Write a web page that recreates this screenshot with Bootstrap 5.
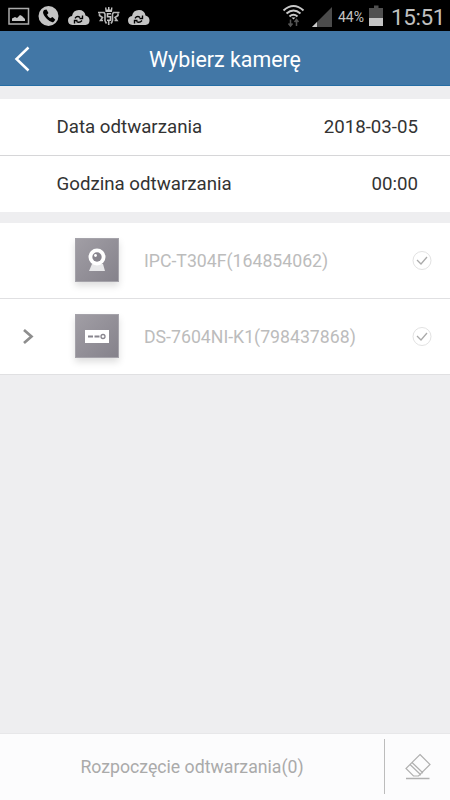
<!DOCTYPE html>
<html lang="pl">
<head>
<meta charset="utf-8">
<meta name="viewport" content="width=device-width, initial-scale=1">
<title>Wybierz kamerę</title>
<link href="https://cdn.jsdelivr.net/npm/bootstrap@5.3.0/dist/css/bootstrap.min.css" rel="stylesheet">
<style>
body{font-family:Roboto,"Liberation Sans",sans-serif;background:#eeeef0;color:#333;font-size:17.7px;line-height:24px}
svg{display:block;flex:none}
.statusbar{height:31px;background:#000;color:#c4c4c4}
.pct{font-size:14px;width:27px;margin-left:6px;padding-top:2px;white-space:nowrap}
.clock{font-size:22.5px;margin-left:8px;margin-right:5px;letter-spacing:-.4px;padding-top:2px;color:#c0c0c0}
.appbar{height:55px;background:#4277a6;border-bottom:1px solid #256da4}
.appbar h1{font-size:21.4px;line-height:28px;padding-top:3px}
.back{width:48px}
.options{margin-top:13px;font-size:18.7px}
.opt{height:56px;padding:0 32px 0 56.5px}
.line{border-bottom:1px solid #d6d6d8;height:57px}
.devices{margin-top:11px}
.device{height:76px;border-bottom:1px solid #e0e0e2;color:#bcbcbc}
.expander{width:75px;padding-left:22px}
.thumb{width:44px;height:44px;margin-bottom:1px;background:linear-gradient(135deg,#a19ea5,#85828b);border:1px solid #a5a3aa;box-shadow:0 4px 7px #0002}
.device-name{margin-left:25px;padding-top:1px}
.tick{margin-right:18px}
.actions{height:67px;background:#fcfcfd;border-top:1px solid #e7e7e9;color:#aaa}
.divider{width:1px;height:55px;margin-bottom:2px;background:#bcbcbc}
.erase{width:65px}
</style>
</head>
<body>
<div class="d-flex flex-column vh-100 overflow-hidden">
<div class="statusbar d-flex align-items-center">
<svg width="160" height="31" fill="#c4c4c4">
<path d="M9 8.500H28.500V24H9Z" fill="none" stroke="#aaa" stroke-width="1.500"/>
<path d="M12 21V18.500L15 17L17 18L20 15L22 16L25 19V21Z"/>
<circle cx="48.500" cy="16" r="10"/>
<path d="M44 10L46.500 9.500L48.500 13L47 14.800Q48 17 50.300 18.300L52.500 17L55.300 19.800L53.500 22Q51 23 47 19T43 12Z" fill="#000"/>
<g id="cloud"><path d="M72.500 25Q68 24.500 68 20.500Q68 16.500 72 16Q73 10 79 10Q84.500 10 85.500 15.500Q89.500 16.500 89.500 20.500Q89.500 24.500 85.500 25Z"/><path d="M75 18.300Q77 15.500 80 17.300M82.500 15.500V18.500H79.500M82 20.500Q79.500 23.500 76.500 21.500M74.500 23.500V20.500H77.500" fill="none" stroke="#000" stroke-width="1.400"/></g>
<use href="#cloud" x="60"/>
<path d="M105 7.500H106.500V9.500H108V7H109.500V9.500H111V7.500H112.500L112 12H105.500Z"/>
<path d="M98 12.500H104L105 14V21M99.500 13.500V15.500L102.500 17.500L100.500 20.500H103M119.500 12.500H113.500L112.500 14V21M118 13.500V15.500L115 17.500L117 20.500H114.500M108.700 21V25M105 21L106.500 23.500M112.500 21L111 23.500" fill="none" stroke="#b8b8b8" stroke-width="1.600"/>
<path d="M111 13.800H107.500V16.700H110.500V20.200H107" fill="none" stroke="#c4c4c4" stroke-width="1.600"/>
</svg>
<svg class="ms-auto" width="50" height="31">
<g fill="none" stroke="#c9c9c9" stroke-width="2"><path d="M1.500 10.500Q11.500 1.500 21.500 10.500M4.500 13.500Q11.500 7.500 18.500 13.500M7.500 16.500Q11.500 13 15.500 16.500"/></g>
<path d="M9.500 17.500H13.500L11.500 19.500Z" fill="#ccc"/>
<path d="M8.500 19.500V25.500M6.500 23.500L8.500 26L10.500 23.500M14.500 26V20M12.500 22L14.500 19.500L16.500 22" fill="none" stroke="#555" stroke-width="1.500"/>
<path d="M30 27L50 7V27Z" fill="#4b4b4b"/><path d="M30 27L35 22V27Z" fill="#ccc"/>
</svg>
<span class="pct">44%</span>
<svg width="14" height="31" class="ms-1"><path d="M0 8H5V5.500H9.500V8H14V18H0Z" fill="#505050"/><path d="M0 18H14V26H0Z" fill="#c4c4c4"/></svg>
<span class="clock">15:51</span>
</div>
<header class="appbar d-flex align-items-center text-white">
<div class="back"><svg width="48" height="54" fill="none" stroke="#fff" stroke-width="2.500"><path d="M28.500 16.500L16.500 28L28.500 39.500"/></svg></div>
<h1 class="mb-0 flex-fill text-center fw-normal">Wybierz kamerę</h1>
<div class="back"></div>
</header>
<section class="options bg-white">
<div class="opt line d-flex align-items-center justify-content-between"><span>Data odtwarzania</span><span>2018-03-05</span></div>
<div class="opt d-flex align-items-center justify-content-between"><span>Godzina odtwarzania</span><span>00:00</span></div>
</section>
<section class="devices bg-white">
<div class="device d-flex align-items-center">
<div class="expander"></div>
<div class="thumb"><svg width="42" height="42"><path d="M16 25H27L29 32H13Z" fill="#e8e8ea"/><circle cx="21" cy="18" r="8.500" fill="#fff"/><circle cx="21" cy="18" r="4.700" fill="#88858e"/><circle cx="19.500" cy="16.500" r="1.400" fill="#fff"/></svg></div>
<span class="device-name">IPC-T304F(164854062)</span>
<svg class="tick ms-auto" width="20" height="20" fill="none"><circle cx="10" cy="9.500" r="9" stroke="#e2e2e2"/><path d="M5 9L9 13L15 6" stroke="#aaa" stroke-width="1.300"/></svg>
</div>
<div class="device d-flex align-items-center">
<div class="expander"><svg width="14" height="16" fill="none" stroke="#8e8e8e" stroke-width="2.700"><path d="M2 1L9.500 7.500L2 14"/></svg></div>
<div class="thumb"><svg width="42" height="42"><path d="M9 15H33V28H9Z" fill="#fff"/><path d="M12 21.500H17M18.500 21.500H23.500" stroke="#88858e" stroke-width="2"/><circle cx="27" cy="21.500" r="2" fill="none" stroke="#88858e" stroke-width="1.300"/></svg></div>
<span class="device-name">DS-7604NI-K1(798437868)</span>
<svg class="tick ms-auto" width="20" height="20" fill="none"><circle cx="10" cy="9.500" r="9" stroke="#e2e2e2"/><path d="M5 9L9 13L15 6" stroke="#aaa" stroke-width="1.300"/></svg>
</div>
</section>
<footer class="actions d-flex align-items-center mt-auto">
<div class="flex-fill text-center">Rozpoczęcie odtwarzania(0)</div>
<div class="divider"></div>
<div class="erase"><svg width="65" height="66" fill="none" stroke="#b0b0b0" stroke-width="1.200"><path d="M35 20.500L45 30.500L33.500 42H28.500L21 34.500ZM25 30.500L36 41M27 28.500L38 39"/><path d="M21 44.500H44.500" stroke-width="1.500"/></svg></div>
</footer>
</div>
<script src="https://cdn.jsdelivr.net/npm/bootstrap@5.3.0/dist/js/bootstrap.bundle.min.js"></script>
</body>
</html>
